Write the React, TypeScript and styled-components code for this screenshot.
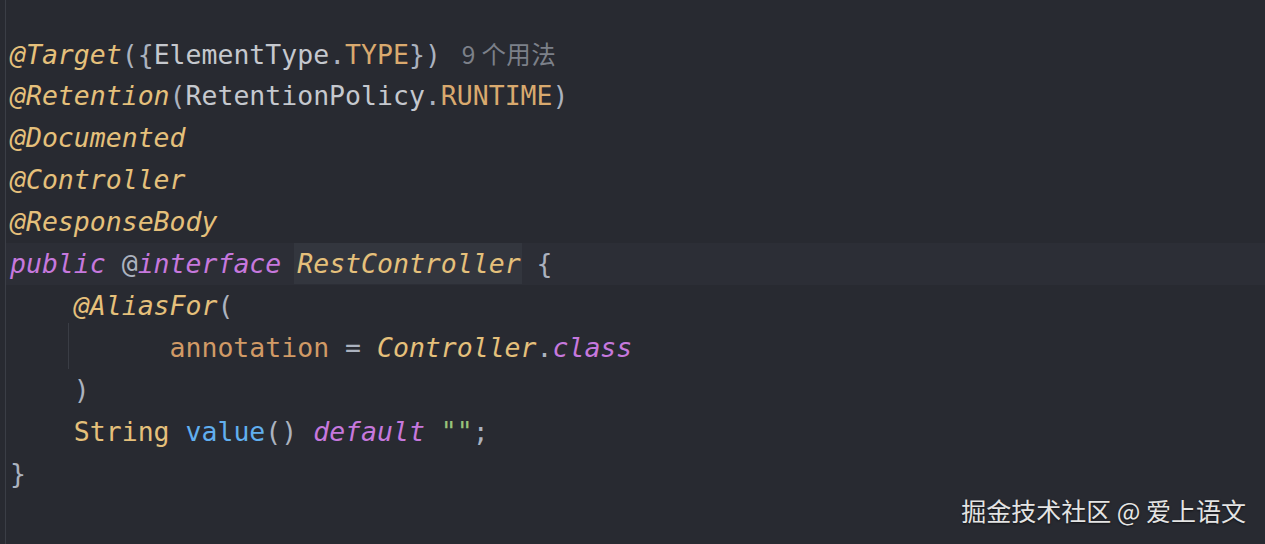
import React from "react";
import styled, { createGlobalStyle } from "styled-components";

const Global = createGlobalStyle`
  html, body { margin: 0; padding: 0; background: #282a31; }
  #root { width: 1265px; height: 544px; }
`;

const Editor = styled.div`
  position: relative;
  width: 1265px;
  height: 544px;
  background: #282a31;
  display: flex;
  overflow: hidden;
`;

const Gutter = styled.div`
  width: 5px;
  flex: none;
  border-right: 1px solid #3b3e46;
`;

const Code = styled.div`
  flex: 1;
  padding-top: 33px;
  display: flex;
  flex-direction: column;
  font-family: "DejaVu Sans Mono", "Liberation Mono", monospace;
  font-size: 26.5px;
  color: #abb2bf;
`;

const Line = styled.div<{ $current?: boolean }>`
  position: relative;
  height: 42px;
  line-height: 42px;
  padding-left: 4px;
  white-space: pre;
  background: ${(p) => (p.$current ? "#2c2e36" : "transparent")};
`;

const Guide = styled.span`
  position: absolute;
  left: 62px;
  top: -4px;
  bottom: 0;
  width: 1px;
  background: #3a3d45;
`;

type Kind =
  | "ann"
  | "punc"
  | "type"
  | "const"
  | "kw"
  | "cls"
  | "field"
  | "fn"
  | "str";

const colors: Record<Kind, string> = {
  ann: "#e5c07b",
  punc: "#abb2bf",
  type: "#c5c8ce",
  const: "#d9a96e",
  kw: "#c678dd",
  cls: "#e5c07b",
  field: "#d19a66",
  fn: "#61afef",
  str: "#98c379",
};

const Tok = styled.span<{ $k: Kind; $i?: boolean }>`
  color: ${(p) => colors[p.$k]};
  font-style: ${(p) => (p.$i ? "italic" : "normal")};
`;

const Highlight = styled.span`
  background: #33363e;
  display: inline-block;
  height: 41px;
  line-height: 42px;
  padding: 0 1px 0 3px;
  margin-left: -3px;
  margin-right: -1px;
`;

const Hint = styled.span`
  font-family: "Noto Sans CJK SC", "Noto Sans", sans-serif;
  font-size: 24.5px;
  color: #7c8089;
  margin-left: 21px;
  letter-spacing: 0.3px;
`;

const Watermark = styled.div`
  position: absolute;
  right: 19px;
  bottom: 16px;
  font-family: "Noto Sans CJK SC", "Noto Sans", sans-serif;
  font-size: 25px;
  color: #e4e4e4;
  text-shadow: 0 1px 2px rgba(0, 0, 0, 0.6);
  white-space: pre;
`;

export default function App() {
  return (
    <>
      <Global />
      <Editor>
        <Gutter />
        <Code>
          <Line>
            <Tok $k="ann" $i>@Target</Tok>
            <Tok $k="punc">({"{"}</Tok>
            <Tok $k="type">ElementType</Tok>
            <Tok $k="punc">.</Tok>
            <Tok $k="const">TYPE</Tok>
            <Tok $k="punc">{"})"}</Tok>
            <Hint>9 个用法</Hint>
          </Line>
          <Line>
            <Tok $k="ann" $i>@Retention</Tok>
            <Tok $k="punc">(</Tok>
            <Tok $k="type">RetentionPolicy</Tok>
            <Tok $k="punc">.</Tok>
            <Tok $k="const">RUNTIME</Tok>
            <Tok $k="punc">)</Tok>
          </Line>
          <Line>
            <Tok $k="ann" $i>@Documented</Tok>
          </Line>
          <Line>
            <Tok $k="ann" $i>@Controller</Tok>
          </Line>
          <Line>
            <Tok $k="ann" $i>@ResponseBody</Tok>
          </Line>
          <Line $current>
            <Tok $k="kw" $i>public</Tok>
            <Tok $k="punc"> @</Tok>
            <Tok $k="kw" $i>interface</Tok>
            <Tok $k="punc"> </Tok>
            <Highlight>
              <Tok $k="cls" $i>RestController</Tok>
            </Highlight>
            <Tok $k="punc"> {"{"}</Tok>
          </Line>
          <Line>
            <Tok $k="punc">    </Tok>
            <Tok $k="ann" $i>@AliasFor</Tok>
            <Tok $k="punc">(</Tok>
          </Line>
          <Line>
            <Guide />
            <Tok $k="punc">          </Tok>
            <Tok $k="field">annotation</Tok>
            <Tok $k="punc"> = </Tok>
            <Tok $k="cls" $i>Controller</Tok>
            <Tok $k="punc">.</Tok>
            <Tok $k="kw" $i>class</Tok>
          </Line>
          <Line>
            <Tok $k="punc">    )</Tok>
          </Line>
          <Line>
            <Tok $k="punc">    </Tok>
            <Tok $k="cls">String</Tok>
            <Tok $k="punc"> </Tok>
            <Tok $k="fn">value</Tok>
            <Tok $k="punc">() </Tok>
            <Tok $k="kw" $i>default</Tok>
            <Tok $k="punc"> </Tok>
            <Tok $k="str">""</Tok>
            <Tok $k="punc">;</Tok>
          </Line>
          <Line>
            <Tok $k="punc">{"}"}</Tok>
          </Line>
        </Code>
        <Watermark>掘金技术社区 @ 爱上语文</Watermark>
      </Editor>
    </>
  );
}
